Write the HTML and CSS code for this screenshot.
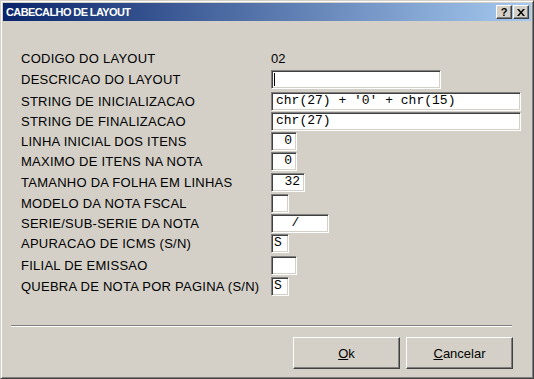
FILE: index.html
```html
<!DOCTYPE html>
<html lang="pt">
<head>
    <meta charset="UTF-8">
    <title>CABECALHO DE LAYOUT</title>
    <link rel="stylesheet" href="styles.css">
</head>
<body>
    <div class="window">
        <div class="titlebar">
            <span class="title">CABECALHO DE LAYOUT</span>
            <div class="tbtns">
                <span class="tbtn help">?</span>
                <span class="tbtn close">
                    <svg width="8" height="7" viewBox="0 0 8 7"><path d="M0 0h2l2 2.5L6 0h2L5 3.5 8 7H6L4 4.5 2 7H0l3-3.5z" fill="#000"/></svg>
                </span>
            </div>
        </div>
        <div class="content">
            <div class="form">
                <div class="row h21"><span class="lbl">CODIGO DO LAYOUT</span><span class="val">02</span></div>
                <div class="row h22"><span class="lbl">DESCRICAO DO LAYOUT</span><div class="field w170"><span class="caret"></span></div></div>
                <div class="row"><span class="lbl">STRING DE INICIALIZACAO</span><div class="field w250">chr(27) + '0' + chr(15)</div></div>
                <div class="row"><span class="lbl">STRING DE FINALIZACAO</span><div class="field w250">chr(27)</div></div>
                <div class="row"><span class="lbl">LINHA INICIAL DOS ITENS</span><div class="field w26 num">0</div></div>
                <div class="row h21"><span class="lbl">MAXIMO DE ITENS NA NOTA</span><div class="field w26 num">0</div></div>
                <div class="row h21"><span class="lbl">TAMANHO DA FOLHA EM LINHAS</span><div class="field w34 num">32</div></div>
                <div class="row"><span class="lbl">MODELO DA NOTA FSCAL</span><div class="field w18"></div></div>
                <div class="row"><span class="lbl">SERIE/SUB-SERIE DA NOTA</span><div class="field w58">  /</div></div>
                <div class="row h22"><span class="lbl">APURACAO DE ICMS (S/N)</span><div class="field w18 chr">S</div></div>
                <div class="row h21"><span class="lbl">FILIAL DE EMISSAO</span><div class="field w26"></div></div>
                <div class="row"><span class="lbl">QUEBRA DE NOTA POR PAGINA (S/N)</span><div class="field w18 chr">S</div></div>
            </div>
            <div class="sep"></div>
            <div class="actions">
                <button class="btn"><u>O</u>k</button>
                <button class="btn"><u>C</u>ancelar</button>
            </div>
        </div>
    </div>
</body>
</html>
```

FILE: styles.css
```css
* {
    box-sizing: border-box;
}
body {
    margin: 0;
    background: #d4d0c8;
    font-family: "Liberation Sans", Arial, sans-serif;
    font-size: 13px;
    color: #000;
}
.window {
    width: 534px;
    height: 379px;
    padding: 2px;
    background: #d4d0c8;
    border: 1px solid;
    border-color: #d4d0c8 #404040 #404040 #d4d0c8;
    box-shadow: inset 1px 1px #fff, inset -1px -1px #808080;
}
.titlebar {
    height: 18px;
    display: flex;
    align-items: center;
    justify-content: space-between;
    padding: 0 2px 0 3px;
    background: linear-gradient(to right, #0a246a, #a6caf0);
}
.title {
    color: #fff;
    font-weight: bold;
    font-size: 11px;
    letter-spacing: -0.6px;
}
.tbtns {
    display: flex;
    gap: 1px;
}
.tbtn {
    width: 16px;
    height: 14px;
    display: flex;
    align-items: center;
    justify-content: center;
    background: #d4d0c8;
    border: 1px solid;
    border-color: #fff #404040 #404040 #fff;
    box-shadow: inset -1px -1px #808080;
    font-weight: bold;
    font-size: 11px;
    line-height: 1;
}
.content {
    padding-top: 28px;
}
.form {
    padding-left: 18px;
}
.row {
    display: grid;
    grid-template-columns: 250px auto;
    align-items: start;
    height: 20px;
}
.row.h21 {
    height: 21px;
}
.row.h22 {
    height: 22px;
}
.lbl,
.val {
    line-height: 19px;
    white-space: nowrap;
}
.lbl {
    letter-spacing: 0.25px;
}
.field {
    position: relative;
    height: 19px;
    background: #fff;
    border: 1px solid;
    border-color: #808080 #fff #fff #808080;
    box-shadow: inset 1px 1px #404040, inset -1px -1px #d4d0c8;
    font-family: "Liberation Mono", "Courier New", monospace;
    font-size: 13px;
    line-height: 16px;
    padding: 0 4px;
    white-space: pre;
    overflow: hidden;
}
.field.num {
    text-align: right;
    padding-right: 4px;
}
.field.chr {
    padding-left: 2px;
}
.w170 { width: 170px; }
.w250 { width: 250px; }
.w26 { width: 26px; }
.w34 { width: 34px; }
.w18 { width: 18px; }
.w58 { width: 58px; }
.caret {
    position: absolute;
    left: 2px;
    top: 2px;
    width: 1px;
    height: 13px;
    background: #000;
}
.sep {
    margin: 28px 19px 0 8px;
    border-top: 1px solid #808080;
    border-bottom: 1px solid #fff;
}
.actions {
    display: flex;
    justify-content: flex-end;
    gap: 6px;
    padding-right: 18px;
    margin-top: 10px;
}
.btn {
    width: 107px;
    height: 32px;
    background: #d4d0c8;
    border: 1px solid;
    border-color: #fff #404040 #404040 #fff;
    box-shadow: inset -1px -1px #808080;
    font-family: "Liberation Sans", Arial, sans-serif;
    font-size: 13px;
    color: #000;
    padding: 0;
}
```
